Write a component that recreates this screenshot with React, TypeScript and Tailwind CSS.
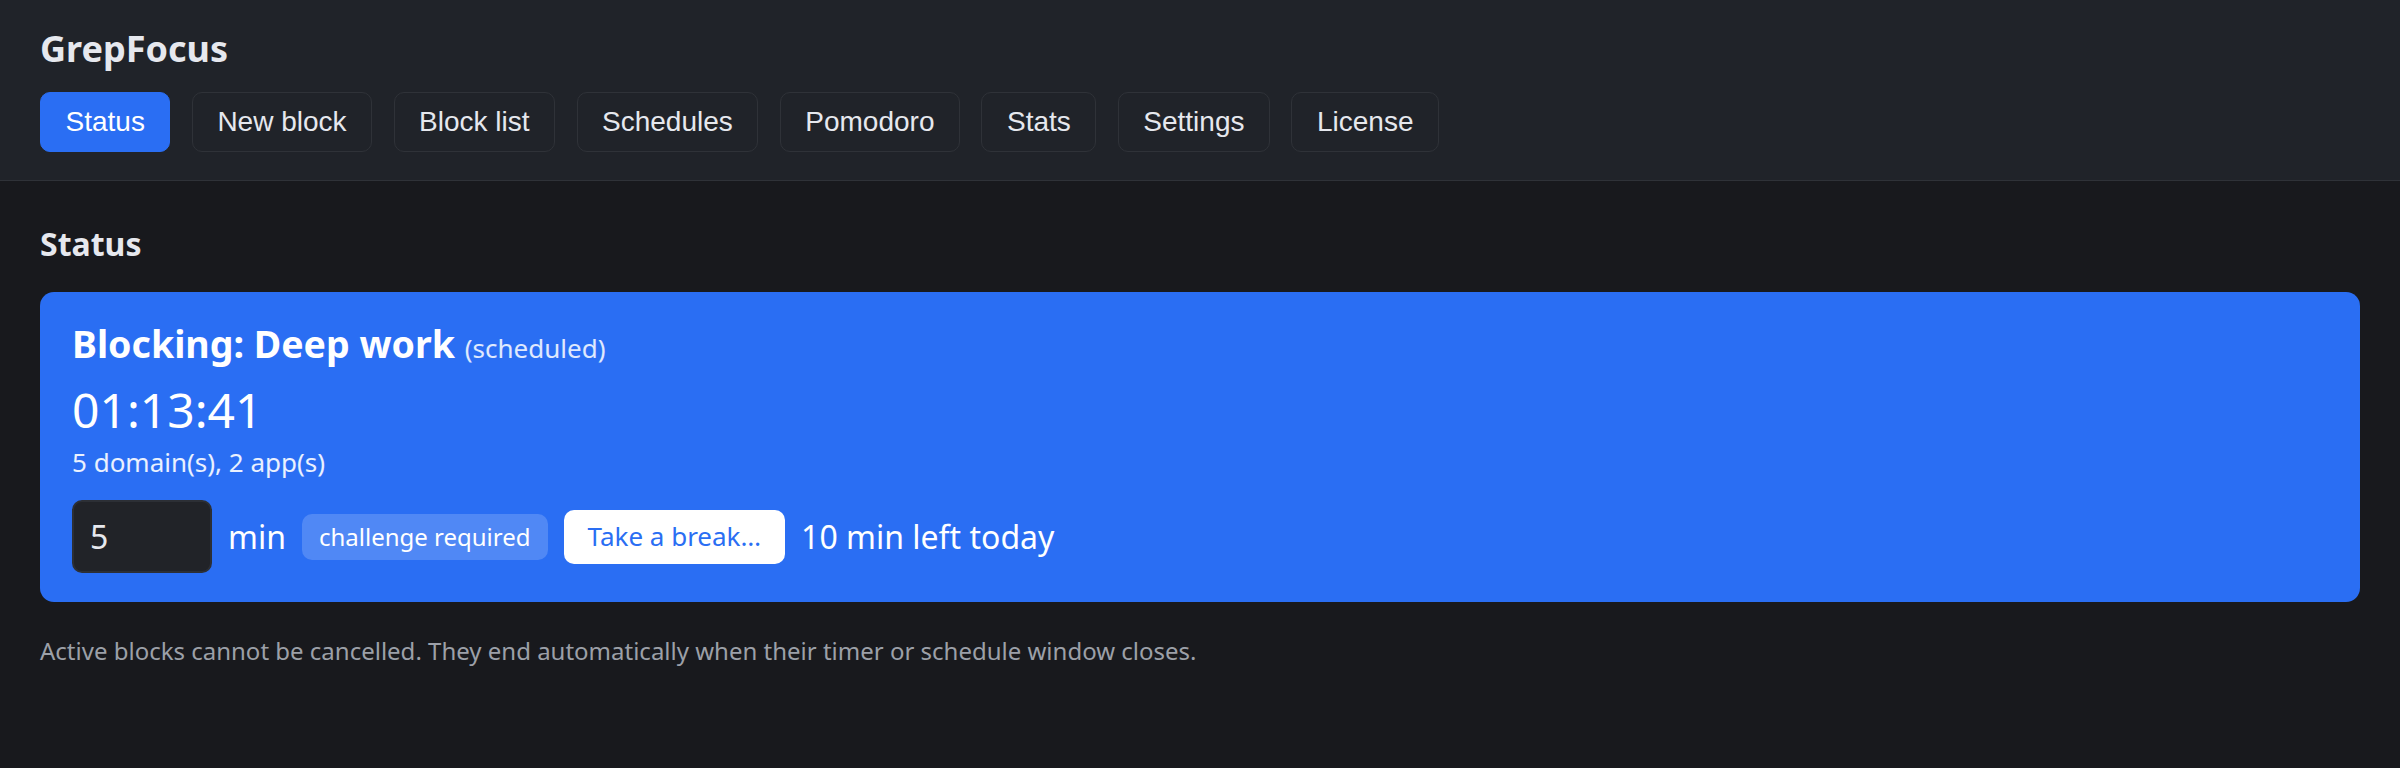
import { useState } from "react";

// --- Tabs shown in the top bar ---
const tabs = [
  "Status",
  "New block",
  "Block list",
  "Schedules",
  "Pomodoro",
  "Stats",
  "Settings",
  "License",
];

// --- Currently running block ---
const activeBlock = {
  name: "Deep work",
  source: "scheduled",
  remaining: "01:13:41",
  domains: 5,
  apps: 2,
  breakLeft: 10,
};

const Header = ({ active, onSelect }: { active: string; onSelect: (t: string) => void }) => (
  <header className="bg-[#202329] border-b border-[#2f3238] px-10 pt-6 pb-[28px]">
    <h1 className="text-[36px] font-bold leading-[49px] mb-[19px] text-[#e6e8ee]">GrepFocus</h1>
    <nav className="flex gap-[21.5px]">
      {tabs.map((tab) => (
        <button
          key={tab}
          onClick={() => onSelect(tab)}
          className={`h-[60px] px-[24.5px] rounded-[10px] border text-[28px] leading-none font-['Liberation_Sans',Arial,sans-serif] ${
            tab === active
              ? "bg-[#2a6ef3] border-[#2a6ef3] text-white"
              : "bg-[#202329] border-[#2f3238] text-[#e6e8ee]"
          }`}
        >
          {tab}
        </button>
      ))}
    </nav>
  </header>
);

const StatusCard = () => {
  const [minutes, setMinutes] = useState("5");

  return (
    <div className="rounded-[14px] bg-[#2a6ef3] pl-8 pr-8 pt-[27px] pb-[29px] text-white">
      <div className="text-[37.5px] leading-[49px]">
        <span className="font-bold">Blocking: {activeBlock.name}</span>{" "}
        <span className="text-[26px] leading-none text-white/85">({activeBlock.source})</span>
      </div>
      <div className="mt-[9px] text-[48px] leading-[65px]">{activeBlock.remaining}</div>
      <div className="mt-[3px] text-[26px] leading-[35px] text-white/90">
        {activeBlock.domains} domain(s), {activeBlock.apps} app(s)
      </div>
      <div className="mt-[20px] flex items-center gap-4">
        <input
          type="text"
          inputMode="numeric"
          value={minutes}
          onChange={(e) => setMinutes(e.target.value)}
          className="w-[140px] h-[73px] rounded-[10px] border-2 border-[#2c2f35] bg-[#212328] px-4 text-[32px] text-[#e6e8ee] outline-none"
        />
        <span className="text-[32px]">min</span>
        <span className="rounded-[10px] bg-[#5088f5] px-[17px] h-[46px] flex items-center text-[24px]">
          challenge required
        </span>
        <button className="h-[54px] rounded-[10px] bg-white px-6 text-[26px] text-[#2a6ef3]">
          Take a break…
        </button>
        <span className="text-[32px]">{activeBlock.breakLeft} min left today</span>
      </div>
    </div>
  );
};

export default function App() {
  const [active, setActive] = useState("Status");

  return (
    <div className="min-h-screen bg-[#18191d] text-[#e6e8ee] font-['Noto_Sans',sans-serif]">
      <Header active={active} onSelect={setActive} />
      <main className="px-10 pt-[41px]">
        <h2 className="text-[32px] font-bold leading-[44px] mb-[26px]">Status</h2>
        <StatusCard />
        <p className="mt-[32px] text-[24px] leading-[33px] text-[#9ca0a8]">
          Active blocks cannot be cancelled. They end automatically when their timer or schedule window closes.
        </p>
      </main>
    </div>
  );
}
